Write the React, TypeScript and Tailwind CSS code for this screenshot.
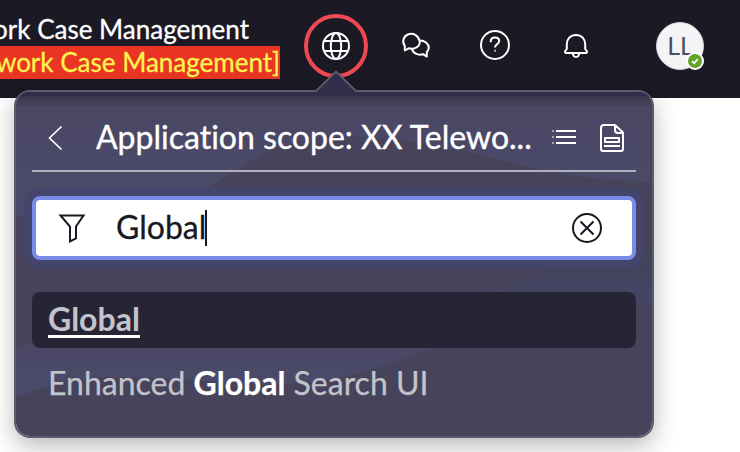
import type { ReactNode } from "react";

function Icon({ children, className }: { children: ReactNode; className: string }) {
  return (
    <svg viewBox="0 0 32 32" fill="none" stroke="currentColor" strokeWidth="2" className={`h-8 w-8 shrink-0 ${className}`}>
      {children}
    </svg>
  );
}

function Header() {
  return (
    <header className="flex h-[98px] bg-[#1a1924] text-white">
      <div className="flex h-[79px] w-[280px] flex-col items-end overflow-hidden pt-[13px] text-[26px] leading-8 whitespace-nowrap">
        <div className="mb-px pr-[31px] [-webkit-text-stroke:0.3px]">ork Case Management</div>
        <div className="flex h-[33px] w-full justify-end bg-[#ea3524] leading-[32px] text-[#fbf44d] [-webkit-text-stroke:0.3px]">work Case Management]</div>
      </div>
      <div className="ml-6 mt-[14px] flex h-16 w-16 items-center justify-center rounded-full border-4 border-[#ee4853]">
        <Icon className="">
          <circle cx="16" cy="16" r="13" />
          <ellipse cx="16" cy="16" rx="5.2" ry="13" />
          <path d="M4 11h24M4 21h24" />
        </Icon>
      </div>
      <Icon className="mt-[30px] ml-8">
        <path d="M19.200 10.800A8 7.500 0 1 0 4.800 15.800V20.500l3.900-2.200c1.100.4 2.400.5 3.600.3" strokeLinejoin="round" />
        <path d="M19.700 10.500C24.400 10.200 28.800 13.600 28.800 17.700c0 1.700-.9 3.200-2 4.500V26.600l-3.700-2.400c-5.300 1.500-10.500-1.200-11-5.400M19.700 10.500c.8 3.700-1.300 7-5.700 7.900-.8.200-1.300.3-1.900.3" strokeLinejoin="round" />
      </Icon>
      <Icon className="mt-[29px] ml-[47px]">
        <circle cx="16" cy="16" r="14" />
        <path d="M11.800 13.200V12c0-2.100 1.700-3.500 4.200-3.500s4.200 1.500 4.200 3.600c0 3.200-4.200 2.800-4.200 6.300" />
        <path d="M16 20.800v2" opacity=".65" />
      </Icon>
      <Icon className="mt-[30px] ml-[49px]">
        <path d="M16 5c-5.600 0-9.200 4-9.200 9.300v4.500c0 1-1.800 1.500-1.800 2.900 0 1 .7 1.300 1.700 1.300h18.600c1 0 1.700-.3 1.700-1.300 0-1.400-1.800-1.900-1.800-2.900v-4.500C25.200 9 21.600 5 16 5Z" />
        <path d="M12.700 23c.3 2.600 1.500 4 3.300 4s3-1.400 3.300-4" />
      </Icon>
      <div className="relative ml-16 mt-[22px] flex h-12 w-12 items-center justify-center rounded-full border border-[#d0d0d9] bg-[#f4f4f7] pb-px text-[25px] text-[#465060]">
        LL
        <svg viewBox="0 0 18 18" className="absolute -right-[1px] -bottom-[1px] h-[18px] w-[18px]">
          <circle cx="9" cy="9" r="9" fill="white" />
          <circle cx="9" cy="9" r="7" fill="#62a52b" />
          <path d="m6 9.200 2.200 2 3.600-4" fill="none" stroke="white" strokeWidth="1.800" />
        </svg>
      </div>
    </header>
  );
}

function Backdrop() {
  return (
    <svg viewBox="16 92 636 344" preserveAspectRatio="none" className="absolute inset-0 -z-10 h-full w-full rounded-[14px]">
      <defs>
        <linearGradient id="top" x1="0" y1="0" x2="0" y2="1">
          <stop offset="0" stopColor="#3a374d" />
          <stop offset="1" stopColor="#46435a" />
        </linearGradient>
        <linearGradient id="right" x1="0" y1="0" x2="0" y2="1">
          <stop offset="0" stopColor="#434158" />
          <stop offset=".7" stopColor="#444463" />
          <stop offset="1" stopColor="#444463" />
        </linearGradient>
        <linearGradient id="wave" x1="0" y1="0" x2="0" y2="1">
          <stop offset="0" stopColor="#4a4764" />
          <stop offset="1" stopColor="#4a4b6b" />
        </linearGradient>
      </defs>
      <path d="M16 92h636v344H16z" fill="#46435a" />
      <path d="M16 96h636v10H16z" fill="url(#top)" />
      <path d="M16 92h636v4H16z" fill="#322d4a" />
      <path d="M16 106H650V181C550 181 500 154 425 144C350 132 300 134 256 158C220 180 205 191 178 200C120 224 60 220 16 215Z" fill="url(#wave)" />
      <path d="M652 244C590 252 558 270 495 291L480 300H580L652 306Z" fill="url(#right)" />
      <path d="M16 347C80 325 300 347 436 347C380 368 340 382 288 384C215 385 190 377 112 377C70 377 50 386 16 397Z" fill="url(#wave)" />
    </svg>
  );
}

function ScopeMenu() {
  return (
    <section className="absolute top-[90px] left-[14px] isolate h-[348px] w-[640px] rounded-2xl border-2 border-[#5e5b6c] px-4 text-white shadow-[0_8px_24px_rgba(0,0,0,0.28)] [font-variant-ligatures:none]">
      <Backdrop />
      <svg viewBox="0 0 40 22" className="absolute -top-[22px] left-[300px] h-[22px] w-10">
        <path d="M0 22 20 1l20 21Z" fill="#322d4a" />
        <path d="M0 21 20 1.500 40 21" fill="none" stroke="#5e5b6c" strokeWidth="1.800" />
      </svg>
      <div className="flex h-20 items-center border-b-2 border-[#b1b0be] pt-[14px]">
        <Icon className="ml-2">
          <path d="M21.500 4.500 9.500 16l12 11.500" strokeWidth="1.700" />
        </Icon>
        <h1 className="ml-6 w-[438px] pb-[2px] text-[32px] whitespace-nowrap [-webkit-text-stroke:0.35px]">Application scope: XX Telewo...</h1>
        <Icon className="ml-3">
          <path d="M10 9h20M10 15h20M10 21h20" />
          <path d="M6 9h2M6 15h2M6 21h2" opacity=".5" />
        </Icon>
        <Icon className="ml-[18px]">
          <path d="M19 3H8a3 3 0 0 0-3 3v21a2 2 0 0 0 2 2h18a2 2 0 0 0 2-2V10.500L19 3v5a3 3 0 0 0 3 3h5M9 16h14v4H9zM8 24h16" strokeLinejoin="round" />
        </Icon>
      </div>
      <div className="mt-6 flex h-16 items-center rounded-lg border-4 border-[#7b8be8] bg-white text-[#171821] shadow-[0_0_0_8px_#43456a]">
        <Icon className="ml-5">
          <path d="M4.500 3.500h23L20 14.500v12l-6 3v-15Z" />
        </Icon>
        <span className="ml-7 pb-[2px] text-[32px] [-webkit-text-stroke:0.3px]">Global</span>
        <i className="-ml-px h-9 w-0.5 bg-[#171821]" />
        <Icon className="mr-[29px] ml-auto">
          <circle cx="16" cy="16" r="14" />
          <path d="m9.500 9.500 13 13m0-13-13 13" />
        </Icon>
      </div>
      <div className="mt-8 flex h-14 rounded-lg bg-[#272436] px-4 pt-1">
        <span className="h-[42px] border-b-[3px] border-white text-[32px] font-bold leading-[46px] text-[#c2c4cc]">Global</span>
      </div>
      <div className="px-4 pt-[11px] text-[32px] leading-[47px] whitespace-nowrap text-[#c2c4cc] [-webkit-text-stroke:0.25px]">
        Enhanced <b className="text-white">Global</b> Search UI
      </div>
    </section>
  );
}

export default function App() {
  return (
    <main className="relative h-[452px] w-[740px] overflow-hidden bg-white font-[Lato,sans-serif]">
      <Header />
      <ScopeMenu />
    </main>
  );
}
